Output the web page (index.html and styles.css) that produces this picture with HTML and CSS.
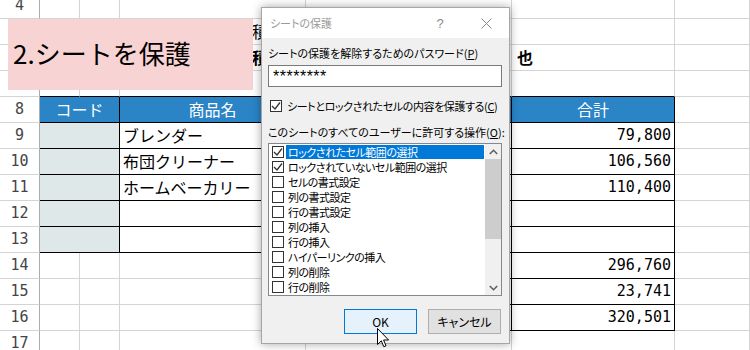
FILE: index.html
```html
<!DOCTYPE html>
<html lang="ja">
<head>
<meta charset="utf-8">
<title>シートの保護</title>
<link rel="stylesheet" href="styles.css">
</head>
<body>
<div class="sheet">
  <div class="row"><div class="rh">4</div><div></div><div></div><div></div><div></div><div></div><div></div></div>
  <div class="row"><div class="rh">5</div><div></div><div></div><div class="far">積</div><div></div><div></div><div></div></div>
  <div class="row"><div class="rh">6</div><div></div><div></div><div class="far b">積</div><div></div><div class="b ya">也</div><div></div></div>
  <div class="row"><div class="rh">7</div><div class="bb"></div><div class="bb"></div><div class="bb"></div><div class="bb"></div><div class="bb"></div><div></div></div>
  <div class="row"><div class="rh">8</div><div class="hd span2">コード</div><div class="hd">商品名</div><div class="hd">単価</div><div class="hd">合計</div><div></div></div>
  <div class="row"><div class="rh">9</div><div class="code span2"></div><div class="tc">ブレンダー</div><div class="tc num"></div><div class="tc num">79,800</div><div></div></div>
  <div class="row"><div class="rh">10</div><div class="code span2"></div><div class="tc">布団クリーナー</div><div class="tc num"></div><div class="tc num">106,560</div><div></div></div>
  <div class="row"><div class="rh">11</div><div class="code span2"></div><div class="tc">ホームベーカリー</div><div class="tc num"></div><div class="tc num">110,400</div><div></div></div>
  <div class="row"><div class="rh">12</div><div class="code span2"></div><div class="tc"></div><div class="tc"></div><div class="tc num"></div><div></div></div>
  <div class="row"><div class="rh">13</div><div class="code span2"></div><div class="tc"></div><div class="tc"></div><div class="tc num"></div><div></div></div>
  <div class="row"><div class="rh">14</div><div></div><div></div><div></div><div class="tc"></div><div class="tc num">296,760</div><div></div></div>
  <div class="row"><div class="rh">15</div><div></div><div></div><div></div><div class="tc"></div><div class="tc num">23,741</div><div></div></div>
  <div class="row"><div class="rh">16</div><div></div><div></div><div></div><div class="tc"></div><div class="tc num">320,501</div><div></div></div>
  <div class="row"><div class="rh">17</div><div></div><div></div><div></div><div></div><div></div><div></div></div>
</div>

<div class="banner">2.シートを保護</div>

<div class="dialog">
  <div class="titlebar">
    <span class="title">シートの保護</span>
    <span class="help">?</span>
    <span class="close"><svg width="11" height="11" viewBox="0 0 11 11"><path d="M0.5 0.5L10.5 10.5M10.5 0.5L0.5 10.5" stroke="#8a8a8a" stroke-width="1" fill="none"/></svg></span>
  </div>
  <div class="dbody">
    <div class="lbl">シートの保護を解除するためのパスワード(<u>P</u>)</div>
    <div class="pw">********</div>
    <div class="chk"><span class="box"><svg width="10" height="10" viewBox="0 0 10 10"><path d="M1 5L4 8L9 1.5" stroke="#333" stroke-width="1.3" fill="none"/></svg></span>シートとロックされたセルの内容を保護する(<u>C</u>)</div>
    <div class="lbl lbl2">このシートのすべてのユーザーに許可する操作(<u>O</u>):</div>
    <div class="list">
      <div class="items">
        <div class="item sel"><span class="box"><svg width="10" height="10" viewBox="0 0 10 10"><path d="M1 5L4 8L9 1.5" stroke="#333" stroke-width="1.3" fill="none"/></svg></span><span class="txt">ロックされたセル範囲の選択</span></div>
        <div class="item"><span class="box"><svg width="10" height="10" viewBox="0 0 10 10"><path d="M1 5L4 8L9 1.5" stroke="#333" stroke-width="1.3" fill="none"/></svg></span><span class="txt">ロックされていないセル範囲の選択</span></div>
        <div class="item"><span class="box"></span><span class="txt">セルの書式設定</span></div>
        <div class="item"><span class="box"></span><span class="txt">列の書式設定</span></div>
        <div class="item"><span class="box"></span><span class="txt">行の書式設定</span></div>
        <div class="item"><span class="box"></span><span class="txt">列の挿入</span></div>
        <div class="item"><span class="box"></span><span class="txt">行の挿入</span></div>
        <div class="item"><span class="box"></span><span class="txt">ハイパーリンクの挿入</span></div>
        <div class="item"><span class="box"></span><span class="txt">列の削除</span></div>
        <div class="item"><span class="box"></span><span class="txt">行の削除</span></div>
      </div>
      <div class="sb">
        <div class="sb-btn"><svg width="9" height="6" viewBox="0 0 9 6"><path d="M0.8 5L4.5 1.3L8.2 5" stroke="#606060" stroke-width="1.6" fill="none"/></svg></div>
        <div class="thumb"></div>
        <div class="track"></div>
        <div class="sb-btn"><svg width="9" height="6" viewBox="0 0 9 6"><path d="M0.8 1L4.5 4.7L8.2 1" stroke="#606060" stroke-width="1.6" fill="none"/></svg></div>
      </div>
    </div>
    <div class="btns">
      <div class="btn ok">OK</div>
      <div class="btn">キャンセル</div>
    </div>
  </div>
</div>

<svg class="cursor" width="13" height="20" viewBox="0 0 13 20"><path d="M0.5 0.5L0.5 16.5L4.3 12.8L6.8 18.7L9 17.8L6.6 12L11.6 12Z" fill="#fff" stroke="#000" stroke-width="1" stroke-linejoin="miter"/></svg>
</body>
</html>
```

FILE: styles.css
```css
* { box-sizing: border-box; margin: 0; padding: 0; }
html, body { width: 750px; height: 350px; overflow: hidden; background: #fff; }
body { position: relative; font-family: "Noto Sans CJK JP", "Noto Sans", sans-serif; color: #000; }

/* spreadsheet grid */
.sheet { margin-top: -7px; }
.row { display: grid; grid-template-columns: 40px 40px 40px 186px 206px 163px 1fr; height: 26px; }
.row > div {
  border-right: 1px solid #d4d4d4;
  border-bottom: 1px solid #d4d4d4;
  font-size: 16px;
  line-height: 25px;
  padding: 0 3px;
  white-space: nowrap;
  overflow: hidden;
}
.row > .rh {
  border-right-color: #ababab;
  text-align: center;
  font-family: "DejaVu Sans Mono", monospace;
  font-size: 15px;
  color: #444;
  padding: 0;
}
.row > .span2 { grid-column: span 2; }
.row > .bb { border-bottom-color: #000; }
.row > .hd {
  background: #2a84c6;
  color: #fff;
  text-align: center;
  border-right-color: #000;
  border-bottom-color: #000;
}
.row > .code { background: #dee8e8; border-right-color: #000; border-bottom-color: #000; }
.row > .tc { border-right-color: #000; border-bottom-color: #000; }
.row > .num { text-align: right; font-family: "DejaVu Sans Mono", monospace; font-size: 15px; }
.row > .far { padding-left: 132px; overflow: visible; }
.row > .ya { padding-left: 5px; }
.b { font-weight: bold; }

/* title banner overlaying the sheet */
.banner {
  position: absolute;
  left: 8px;
  top: 19px;
  width: 245px;
  height: 71px;
  background: #f8d3d3;
  display: flex;
  align-items: center;
  padding: 0 0 4px 5px;
  font-size: 26px;
  color: #000;
}

/* dialog */
.dialog {
  position: absolute;
  left: 261px;
  top: 7px;
  width: 249px;
  height: 337px;
  border: 1px solid #a6a6a6;
  background: #f0f0f0;
  box-shadow: 0 0 9px rgba(0, 0, 0, 0.35);
  font-size: 11px;
  font-feature-settings: "palt";
  display: flex;
  flex-direction: column;
}
.titlebar {
  height: 30px;
  background: #fff;
  display: flex;
  align-items: center;
  padding-left: 8px;
  color: #999;
}
.title { flex: 1; }
.help { width: 30px; text-align: center; margin-right: 16px; color: #8a8a8a; font-family: "Liberation Sans", sans-serif; font-size: 13px; }
.close { width: 30px; margin-right: 8px; display: flex; justify-content: center; }

.dbody { flex: 1; padding: 0 7px 0 6px; display: flex; flex-direction: column; }
.lbl { margin-top: 7px; line-height: 16px; white-space: nowrap; }
.lbl2 { margin-top: 10px; }
.pw {
  margin-top: 4px;
  height: 22px;
  background: #fff;
  border: 1px solid #7a7a7a;
  padding-left: 4px;
  font-family: "Liberation Sans", sans-serif;
  font-size: 16px;
  line-height: 22px;
  letter-spacing: 0.5px;
}
.chk { margin-top: 11px; line-height: 16px; display: flex; align-items: center; white-space: nowrap; letter-spacing: -0.4px; }
.chk .box { margin: 0 5px 0 2px; }
.box {
  width: 12px;
  height: 12px;
  flex: none;
  border: 1px solid #333;
  background: #fff;
  display: flex;
  align-items: center;
  justify-content: center;
}

.list {
  margin-top: 3px;
  height: 153px;
  background: #fff;
  border: 1px solid #828790;
  display: flex;
}
.items { flex: 1; padding: 1px 1px 0 3px; display: flex; flex-direction: column; gap: 1px; }
.item { height: 14px; display: flex; align-items: center; }
.item .box { margin-right: 2px; }
.txt { flex: 1; height: 14px; line-height: 14px; padding-left: 2px; white-space: nowrap; letter-spacing: -0.5px; }
.sel .txt { background: #0078d7; color: #fff; }

.sb { width: 16px; background: #f0f0f0; display: flex; flex-direction: column; }
.sb-btn { height: 15px; display: flex; align-items: center; justify-content: center; }
.thumb { height: 80px; background: #cdcdcd; }
.track { flex: 1; }

.btns { margin-top: 13px; display: flex; justify-content: flex-end; gap: 11px; margin-right: 1px; }
.btn {
  width: 73px;
  height: 25px;
  border: 1px solid #adadad;
  background: #e1e1e1;
  display: flex;
  align-items: center;
  justify-content: center;
  font-size: 12px;
}
.btn.ok { border-color: #0078d7; background: #e5f1fb; }

.cursor { position: absolute; left: 377px; top: 328px; }
```
